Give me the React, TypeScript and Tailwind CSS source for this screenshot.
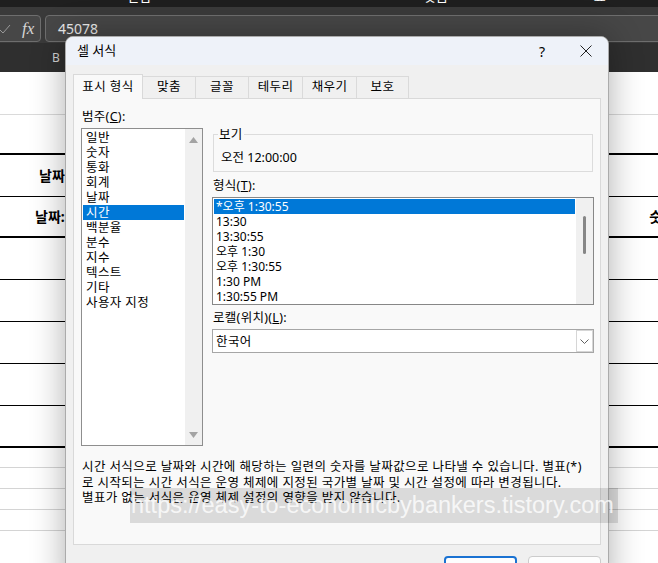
import { useState } from 'react';

const categories = ['일반', '숫자', '통화', '회계', '날짜', '시간', '백분율', '분수', '지수', '텍스트', '기타', '사용자 지정'];
const formats = ['*오후 1:30:55', '13:30', '13:30:55', '오후 1:30', '오후 1:30:55', '1:30 PM', '1:30:55 PM'];

const tabs = [
  { label: '표시 형식', w: 'w-[70px]' },
  { label: '맞춤', w: 'w-[53px]' },
  { label: '글꼴', w: 'w-[53px]' },
  { label: '테두리', w: 'w-[54px]' },
  { label: '채우기', w: 'w-[54px]' },
  { label: '보호', w: 'w-[52px]' },
];

const Arrow = ({ down }: { down?: boolean }) => (
  <svg width="9" height="6" viewBox="0 0 9 6">
    <polygon points={down ? '0,0 9,0 4.5,6' : '0,6 9,6 4.5,0'} fill="#a3a3a3" />
  </svg>
);

const App = () => {
  const [category, setCategory] = useState(5);
  const [format, setFormat] = useState(0);

  return (
    <div className="relative w-[658px] h-[563px] overflow-hidden bg-white font-['Noto_Sans','Noto_Sans_CJK_KR',sans-serif] text-[12px] text-black">
      {/* ribbon bottom edge */}
      <div className="h-[7px] bg-[#1f1f1f] overflow-hidden flex items-start text-[13px] leading-[13px] text-white">
        <span className="ml-[127px] -mt-[10px]">편집</span>
        <span className="ml-[273px] -mt-[10px]">맞춤</span>
        <span className="ml-[146px] -mt-[10px]">표</span>
      </div>

      {/* formula bar */}
      <div className="h-[36px] bg-[#3a3a3a] pt-[8px] flex gap-[4px]">
        <div className="-ml-[6px] w-[47px] h-[27px] rounded-[4px] border border-[#6e6e6e] bg-[#474747] flex items-center">
          <svg width="12" height="12" viewBox="0 0 12 12" className="ml-[4px]">
            <path d="M1 7 L4 10 L11 2" stroke="#9a9a9a" strokeWidth="1" fill="none" />
          </svg>
          <span className="ml-[11px] font-['Liberation_Serif',serif] italic text-[17px] text-[#d6d6d6] leading-[17px]">fx</span>
        </div>
        <div className="flex-1 -mr-[6px] h-[27px] rounded-[4px] border border-[#6e6e6e] bg-[#474747] pl-[12px] text-[14px] leading-[25px] text-[#ececec]">
          45078
        </div>
      </div>

      {/* column headers */}
      <div className="h-[29px] bg-[#2f2f2f] text-[#d2d2d2] text-[12px] leading-[29px] pl-[52px]">B</div>

      {/* sheet */}
      <div className="font-bold text-[14px]">
        <div className="h-[43px] border-b border-[#dadada]" />
        <div className="h-[40px] border-b-2 border-black" />
        <div className="h-[42px] border-b border-black flex items-center pl-[39px]">날짜</div>
        <div className="h-[41px] border-b-2 border-black flex items-center pl-[35px]">
          <span>날짜:</span>
          <span className="ml-auto -mr-[17px]">숫자</span>
        </div>
        <div className="h-[42px] border-b border-black" />
        <div className="h-[42px] border-b border-black" />
        <div className="h-[42px] border-b border-black" />
        <div className="h-[42px] border-b border-black" />
        <div className="h-[42px] border-b-2 border-black" />
        <div className="h-[20px] border-b border-[#d4d4d4]" />
        <div className="h-[21px] border-b border-[#d4d4d4]" />
        <div className="h-[21px] border-b border-[#d4d4d4]" />
        <div className="h-[21px] border-b border-[#d4d4d4]" />
      </div>

      {/* dialog */}
      <div className="absolute left-[65px] top-[36px] w-[544px] h-[560px] rounded-t-[8px] border border-[#ababab] bg-[#f0f0f0] shadow-[0_0_34px_rgba(0,0,0,0.32)] overflow-hidden">
        <div className="h-[28px] bg-[#eef2f9] flex items-center pl-[11px] text-[13px]">
          <span>셀 서식</span>
          <span className="ml-auto text-[14px]">?</span>
          <svg width="12" height="12" viewBox="0 0 12 12" className="ml-[35px] mr-[16px]">
            <path d="M0.5 0.5 L11.5 11.5 M11.5 0.5 L0.5 11.5" stroke="#222" strokeWidth="1" />
          </svg>
        </div>

        {/* tabs */}
        <div className="h-[33px] flex items-end pl-[7px] text-[12.5px] tracking-[0.4px]">
          {tabs.map((t, i) =>
            i === 0 ? (
              <div
                key={t.label}
                className={`${t.w} h-[25px] -mb-[1px] relative z-10 border border-b-0 border-[#d9d9d9] bg-[#f9f9f9] flex items-center justify-center`}
              >
                {t.label}
              </div>
            ) : (
              <div
                key={t.label}
                className={`${t.w} h-[22px] border-t border-r border-[#dadada] bg-[#f0f0f0] flex items-center justify-center`}
              >
                {t.label}
              </div>
            )
          )}
        </div>

        {/* tab panel */}
        <div className="ml-[7px] w-[528px] h-[447px] border border-[#d9d9d9] bg-[#f9f9f9] pt-[10px] pl-[7px]">
          <div className="flex">
            {/* category */}
            <div className="w-[122px]">
              <div className="h-[19px] leading-[15px] pl-[1px] text-[12.5px] tracking-[0.3px]">
                범주(<u>C</u>):
              </div>
              <div className="h-[318px] border border-[#8e8e8e] bg-white flex">
                <div className="flex-1 pt-[1px] text-[12.5px] tracking-[0.4px]">
                  {categories.map((c, i) => (
                    <div
                      key={c}
                      onClick={() => setCategory(i)}
                      className={`h-[15px] leading-[15px] mx-[1px] pl-[3px] ${i === category ? 'bg-[#0078d7] text-white' : ''}`}
                    >
                      {c}
                    </div>
                  ))}
                </div>
                <div className="w-[17px] bg-[#f0f0f0] flex flex-col items-center justify-between pt-[8px] pb-[7px]">
                  <Arrow />
                  <Arrow down />
                </div>
              </div>
            </div>

            {/* right side */}
            <div className="ml-[9px] w-[382px]">
              <fieldset className="mt-[18px] ml-[1px] w-[380px] h-[45px] border border-[#dcdcdc] px-[4px]">
                <legend className="px-[1px] leading-[15px] text-[12.5px] tracking-[0.3px]">보기</legend>
                <div className="pt-[8px] pl-[3px] leading-[15px] text-[12.5px]">오전 12:00:00</div>
              </fieldset>

              <div className="mt-[6px] h-[19px] leading-[15px] pl-[1px] text-[12.5px] tracking-[0.3px]">
                형식(<u>T</u>):
              </div>
              <div className="h-[108px] border border-[#878787] bg-white flex">
                <div className="flex-1 pt-[1px]">
                  {formats.map((f, i) => (
                    <div
                      key={f}
                      onClick={() => setFormat(i)}
                      className={`h-[15px] leading-[15px] mx-[1px] pl-[2px] ${i === format ? 'bg-[#0078d7] text-white' : ''}`}
                    >
                      {f}
                    </div>
                  ))}
                </div>
                <div className="w-[17px] bg-[#f0f0f0] flex justify-center pt-[18px]">
                  <div className="w-[3px] h-[38px] rounded-full bg-[#868686]" />
                </div>
              </div>

              <div className="mt-[5px] h-[19px] leading-[15px] pl-[1px] text-[12.5px] tracking-[0.3px]">
                로캘(위치)(<u>L</u>):
              </div>
              <div className="h-[24px] border border-[#a6a6a6] bg-white flex items-center">
                <span className="flex-1 pl-[3px] leading-[15px] text-[12.5px] tracking-[0.4px]">한국어</span>
                <div className="w-[17px] h-[22px] border border-[#d6d6d6] flex items-center justify-center">
                  <svg width="9" height="5" viewBox="0 0 9 5">
                    <path d="M0.5 0.5 L4.5 4.5 L8.5 0.5" stroke="#606060" strokeWidth="1" fill="none" />
                  </svg>
                </div>
              </div>
            </div>
          </div>

          <div className="mt-[13px] pl-[1px] leading-[15.5px] text-[12.5px] tracking-[0.4px] whitespace-nowrap">
            <p>시간 서식으로 날짜와 시간에 해당하는 일련의 숫자를 날짜값으로 나타낼 수 있습니다. 별표(*)</p>
            <p>로 시작되는 시간 서식은 운영 체제에 지정된 국가별 날짜 및 시간 설정에 따라 변경됩니다.</p>
            <p>별표가 없는 서식은 운영 체제 설정의 영향을 받지 않습니다.</p>
          </div>
        </div>

        {/* buttons */}
        <div className="mt-[11px] flex justify-end gap-[11px] pr-[7px]">
          <button className="w-[73px] h-[30px] rounded-[4px] border-2 border-[#1a72d2] bg-[#fdfdfd] leading-[26px]">확인</button>
          <button className="w-[73px] h-[30px] rounded-[4px] border border-[#cccccc] bg-[#fdfdfd] leading-[28px]">취소</button>
        </div>
      </div>

      {/* watermark */}
      <div className="absolute left-[130px] top-[488px] w-[488px] h-[35px] bg-[rgba(0,0,0,0.12)] pl-[1px] font-['Liberation_Sans',sans-serif] text-[23.5px] leading-[34px] text-[rgba(255,255,255,0.8)] whitespace-nowrap overflow-hidden">
        https://easy-to-economicbybankers.tistory.com
      </div>
    </div>
  );
};

export default App;
